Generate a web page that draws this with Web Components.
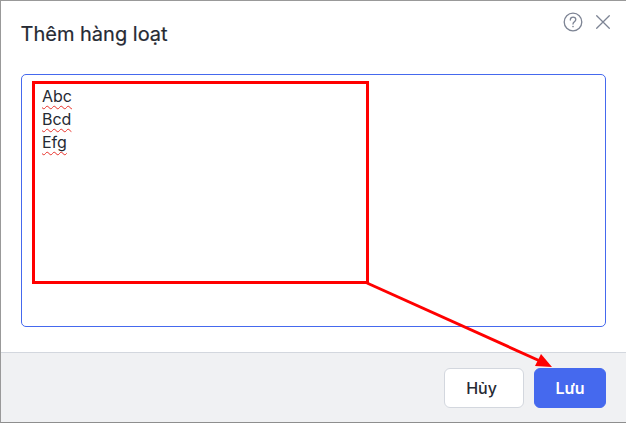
<!DOCTYPE html>
<html>
<head>
<meta charset="utf-8">
<style>
  html, body { margin: 0; height: 100%; background: #fff; }
  body { overflow: hidden; font-family: Inter, "Liberation Sans", sans-serif; }
</style>
</head>
<body>
<bulk-dialog heading="Thêm hàng loạt">
  <bulk-editor>
    <span>Abc</span>
    <span>Bcd</span>
    <span>Efg</span>
  </bulk-editor>
  <dialog-button slot="footer">Hủy</dialog-button>
  <dialog-button slot="footer" primary>Lưu</dialog-button>
</bulk-dialog>
<script>
// Dialog frame
const dialogTemplate = document.createElement('template');
dialogTemplate.innerHTML = /*html*/`
  <style>
    :host {
      display: flex;
      flex-direction: column;
      box-sizing: border-box;
      position: relative;
      width: 626px;
      height: 423px;
      border-top: 1px solid #999;
      border-left: 1px solid #999;
      border-bottom: 1px solid #8e8e8e;
      background: #fff;
      color: #262a33;
    }
    header {
      display: flex;
      justify-content: space-between;
      height: 73px;
      box-sizing: border-box;
      padding: 21px 13px 0 19.5px;
    }
    h1 {
      margin: 0;
      font-size: 20px;
      line-height: 24px;
      font-weight: 400;
      -webkit-text-stroke: .2px #262a33;
    }
    .tools {
      display: flex;
      gap: 10px;
      margin-top: -10px;
      height: 20px;
    }
    main {
      flex: 1;
      padding: 0 20px 25px 20px;
      min-height: 0;
      display: flex;
    }
    footer {
      display: flex;
      justify-content: flex-end;
      gap: 10px;
      height: 70px;
      box-sizing: border-box;
      padding: 15px 20px 0 0;
      background: #f0f1f3;
      border-top: 1px solid #d3d7de;
    }
    svg { display: block; }
    .mark { position: absolute; left: -1px; top: -1px; pointer-events: none; }
  </style>
  <header>
    <h1></h1>
    <div class="tools">
      <svg width="20" height="20" viewBox="0 0 20 20" fill="none" stroke="#7d8494" stroke-width="1.3">
        <circle cx="10" cy="10" r="8.8"/>
        <path d="M7.3 8c0-1.7 1.2-2.8 2.8-2.8s2.7 1 2.7 2.4c0 2.3-2.8 2.2-2.8 4.5" stroke-linecap="round"/>
        <circle cx="10" cy="14.6" r=".8" fill="#7d8494" stroke="none"/>
      </svg>
      <svg width="20" height="20" viewBox="0 0 20 20" fill="none" stroke="#7d8494" stroke-width="1.3" stroke-linecap="round">
        <path d="M3.7 3.7l12.6 12.6M16.3 3.7L3.7 16.3"/>
      </svg>
    </div>
  </header>
  <main><slot></slot></main>
  <footer><slot name="footer"></slot></footer>
  <svg class="mark" width="626" height="423" fill="none">
    <path d="M367 283L540 361" stroke="#f00" stroke-width="3"/>
    <path d="M552 367L535 366L541 354Z" fill="#f00"/>
  </svg>
`;

class BulkDialog extends HTMLElement {
  constructor() {
    super();
    this.attachShadow({ mode: 'open' });
    this.shadowRoot.appendChild(dialogTemplate.content.cloneNode(true));
    this.shadowRoot.querySelector('h1').textContent = this.getAttribute('heading');
  }
}

// Text box with the red highlight over it
const editorTemplate = document.createElement('template');
editorTemplate.innerHTML = /*html*/`
  <style>
    :host {
      display: block;
      flex: 1;
      position: relative;
      box-sizing: border-box;
      border: 1px solid #4569ee;
      border-radius: 5px;
      padding: 10px 20px;
      font-size: 16px;
      line-height: 23px;
      color: #262a33;
    }
    ::slotted(span) {
      display: block;
      width: max-content;
      text-decoration: underline wavy #e8312a 1.3px;
      text-underline-offset: 3px;
      text-decoration-skip-ink: none;
    }
    .highlight {
      position: absolute;
      left: 10px;
      top: 6px;
      width: 337px;
      height: 203px;
      box-sizing: border-box;
      border: 3px solid #f00;
    }
  </style>
  <slot></slot>
  <div class="highlight"></div>
`;

class BulkEditor extends HTMLElement {
  constructor() {
    super();
    this.attachShadow({ mode: 'open' });
    this.shadowRoot.appendChild(editorTemplate.content.cloneNode(true));
  }
}

// Footer button
const buttonTemplate = document.createElement('template');
buttonTemplate.innerHTML = /*html*/`
  <style>
    :host {
      display: flex;
      align-items: center;
      justify-content: center;
      box-sizing: border-box;
      width: 80px;
      height: 40px;
      padding-right: 5px;
      background: #fff;
      border: 1px solid #d3d7de;
      border-radius: 6px;
      font-size: 16px;
      font-weight: 500;
      color: #262a33;
    }
    :host([primary]) {
      width: 72px;
      padding-right: 0;
      background: #4569ee;
      border-color: #4569ee;
      color: #fff;
      font-weight: 600;
    }
  </style>
  <slot></slot>
`;

class DialogButton extends HTMLElement {
  constructor() {
    super();
    this.attachShadow({ mode: 'open' });
    this.shadowRoot.appendChild(buttonTemplate.content.cloneNode(true));
  }
}

customElements.define('bulk-dialog', BulkDialog);
customElements.define('bulk-editor', BulkEditor);
customElements.define('dialog-button', DialogButton);
</script>
</body>
</html>
